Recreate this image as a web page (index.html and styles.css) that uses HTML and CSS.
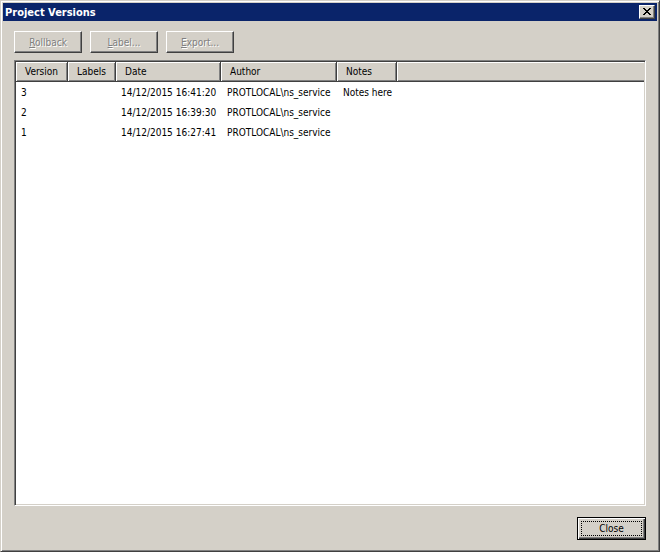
FILE: index.html
```html
<!DOCTYPE html>
<html>
<head>
<meta charset="utf-8">
<title>Project Versions</title>
<link rel="stylesheet" href="styles.css">
</head>
<body>
<div class="window">
  <div class="titlebar">
    <span class="title">Project Versions</span>
    <span class="close-x">
      <svg width="8" height="7" viewBox="0 0 8 7"><path d="M0 0h2v1h1v1h2V1h1V0h2v1H7v1H6v1H5v1h1v1h1v1h1v1H6V6H5V5H3v1H2v1H0V6h1V5h1V4h1V3H2V2H1V1H0z" fill="#000"/></svg>
    </span>
  </div>
  <div class="content">
    <div class="toolbar">
      <button class="btn" disabled><u>R</u>ollback</button>
      <button class="btn" disabled><u>L</u>abel...</button>
      <button class="btn" disabled><u>E</u>xport...</button>
    </div>
    <div class="listview">
      <div class="header">
        <div class="hcell c-ver">Version</div>
        <div class="hcell c-lab">Labels</div>
        <div class="hcell c-date">Date</div>
        <div class="hcell c-auth">Author</div>
        <div class="hcell c-notes">Notes</div>
        <div class="hcell c-rest"></div>
      </div>
      <div class="row">
        <div class="cell c-ver">3</div>
        <div class="cell c-lab"></div>
        <div class="cell c-date">14/12/2015 16:41:20</div>
        <div class="cell c-auth">PROTLOCAL\ns_service</div>
        <div class="cell c-notes">Notes here</div>
      </div>
      <div class="row">
        <div class="cell c-ver">2</div>
        <div class="cell c-lab"></div>
        <div class="cell c-date">14/12/2015 16:39:30</div>
        <div class="cell c-auth">PROTLOCAL\ns_service</div>
        <div class="cell c-notes"></div>
      </div>
      <div class="row">
        <div class="cell c-ver">1</div>
        <div class="cell c-lab"></div>
        <div class="cell c-date">14/12/2015 16:27:41</div>
        <div class="cell c-auth">PROTLOCAL\ns_service</div>
        <div class="cell c-notes"></div>
      </div>
    </div>
    <div class="footer">
      <button class="btn btn-default"><span class="focus">Close</span></button>
    </div>
  </div>
</div>
</body>
</html>
```
FILE: styles.css
```css
html, body {
  margin: 0;
  padding: 0;
  background: #d4d0c8;
}
body {
  font-family: "DejaVu Sans Condensed", "DejaVu Sans", sans-serif;
  font-stretch: condensed;
  font-size: 10px;
  color: #000;
}
.window {
  width: 660px;
  height: 552px;
  box-sizing: border-box;
  background: #d4d0c8;
  border: 1px solid;
  border-color: #d4d0c8 #404040 #404040 #d4d0c8;
  box-shadow: inset 1px 1px #fff, inset -1px -1px #808080;
  padding: 2px;
  display: flex;
  flex-direction: column;
}
.titlebar {
  height: 18px;
  background: #0a246a;
  display: flex;
  align-items: center;
  justify-content: space-between;
  padding: 0 2px 0 2px;
}
.title {
  color: #fff;
  font-weight: bold;
  font-size: 11px;
}
.close-x {
  width: 16px;
  height: 14px;
  box-sizing: border-box;
  background: #d4d0c8;
  border: 1px solid;
  border-color: #fff #404040 #404040 #fff;
  box-shadow: inset -1px -1px #808080;
  display: flex;
  align-items: center;
  justify-content: center;
  padding-bottom: 1px;
}
.close-x svg { display: block; }
.content {
  flex: 1;
  display: flex;
  flex-direction: column;
  padding: 10px 11px 0 11px;
}
.toolbar {
  display: flex;
  gap: 8px;
  height: 22px;
}
.btn {
  width: 68px;
  height: 22px;
  box-sizing: border-box;
  background: #d4d0c8;
  border: 1px solid;
  border-color: #fff #404040 #404040 #fff;
  box-shadow: inset -1px -1px #808080;
  font-family: inherit;
  font-stretch: condensed;
  font-size: 10px;
  color: #000;
  padding: 1px 0 0 0;
  margin: 0;
}
.btn:disabled {
  color: #808080;
  text-shadow: 1px 1px #fff;
}
.btn u { text-decoration: underline; }
.listview {
  margin-top: 7px;
  height: 446px;
  box-sizing: border-box;
  background: #fff;
  border: 1px solid;
  border-color: #808080 #fff #fff #808080;
  box-shadow: inset 1px 1px #404040, inset -1px -1px #d4d0c8;
  padding: 1px;
}
.header {
  display: flex;
  height: 20px;
}
.hcell {
  box-sizing: border-box;
  height: 20px;
  background: #d4d0c8;
  box-shadow: inset 1px 1px #fff, inset -1px -1px #808080;
  border-right: 1px solid #404040;
  border-bottom: 1px solid #404040;
  padding: 1px 0 0 9px;
  line-height: 18px;
  white-space: nowrap;
}
.hcell.c-rest {
  flex: 1;
  border-right: 0;
  box-shadow: inset 1px 1px #fff, inset 0 -1px #808080;
}
.c-ver { width: 52px; }
.c-lab { width: 48px; }
.c-date { width: 105px; }
.c-auth { width: 116px; }
.c-notes { width: 60px; }
.row {
  display: flex;
  height: 20px;
  line-height: 20px;
  padding-top: 1px;
  box-sizing: border-box;
}
.row:first-of-type { margin-top: 0; }
.cell {
  box-sizing: border-box;
  padding-left: 5px;
  white-space: nowrap;
}
.cell.c-auth, .cell.c-notes { padding-left: 6px; }
.footer {
  display: flex;
  justify-content: flex-end;
  margin-top: 11px;
}
.btn-default {
  width: 69px;
  height: 23px;
  border: 1px solid #000;
  box-shadow: inset 1px 1px #fff, inset -1px -1px #404040, inset -2px -2px #808080;
  display: flex;
  align-items: stretch;
  justify-content: stretch;
  padding: 3px;
}
.focus {
  flex: 1;
  border: 1px dotted #000;
  display: flex;
  align-items: center;
  justify-content: center;
}
```
